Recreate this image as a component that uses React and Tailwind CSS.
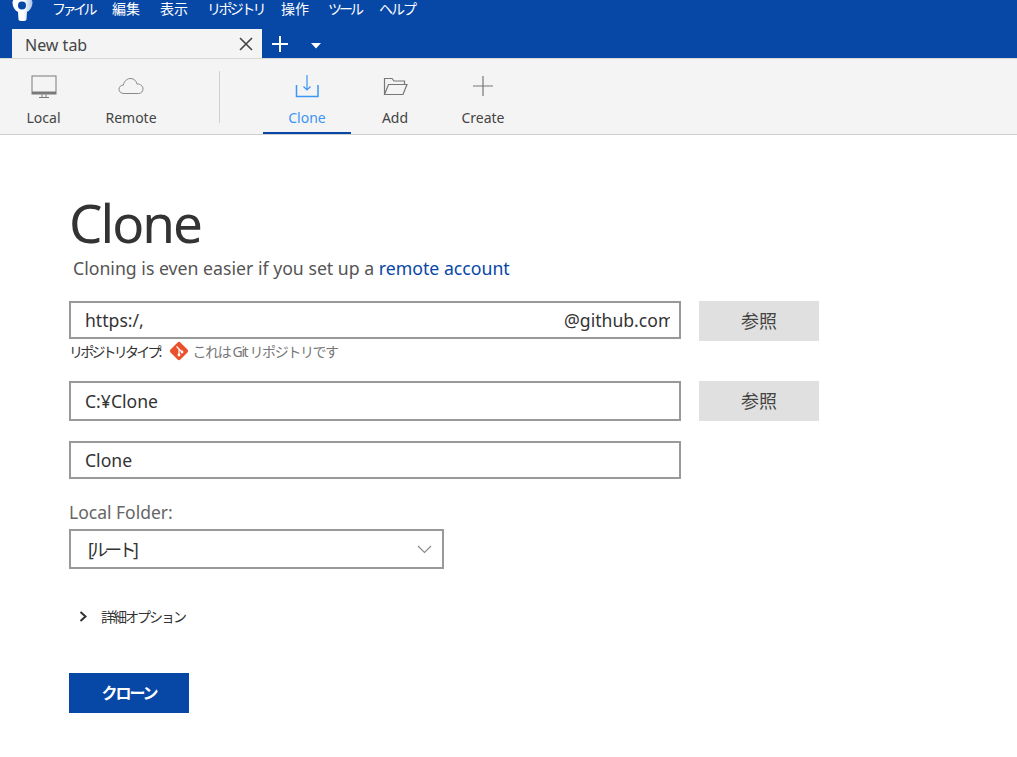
const F = "font-['Noto_Sans','Noto_Sans_CJK_JP',sans-serif]";

function Tool({ label, children, active, w = "w-[88px]" }) {
  return (
    <div className={`${w} h-[75px] flex flex-col items-center border-b-2 ${active ? "border-[#0747a6]" : "border-transparent"}`}>
      <div className="h-[36px] mt-[10px] mb-[2px] flex items-center justify-center">{children}</div>
      <div className={`mt-[1px] text-[14px] leading-[20px] ${active ? "text-[#3d95f5]" : "text-[#444]"}`}>{label}</div>
    </div>
  );
}

function Field({ children, h = "h-[38px]", w = "w-[612px]" }) {
  return (
    <div className={`${w} ${h} border-2 border-[#999] bg-white flex items-center justify-between pl-[14px] pr-[9px] text-[17.6px] text-[#333] overflow-hidden whitespace-nowrap`}>
      {children}
    </div>
  );
}

function Browse() {
  return <div className="w-[120px] h-[40px] ml-[18px] bg-[#e0e0e0] flex items-center justify-center text-[18px] text-[#444]">参照</div>;
}

export default function App() {
  return (
    <div className={`${F} w-[1017px] h-[757px] bg-white overflow-hidden`}>
      <div className="h-[58px] bg-[#0747a6] flex flex-col">
        <div className="h-[29px] flex items-start">
          <svg className="ml-[12px]" width="21" height="22" viewBox="0 0 21 22">
            <defs>
              <linearGradient id="logoShade" x1="0" x2="1" y1="0" y2="0">
                <stop offset="0.55" stopColor="#ffffff" />
                <stop offset="1" stopColor="#a9c2e6" />
              </linearGradient>
            </defs>
            <path d="M0.5 2 C0.5 -4 20.5 -4 20.5 2 C20.5 7 18 10.5 15 12 L14.5 19.5 C14.5 21.5 6.5 21.5 6.5 19.5 L6 12 C3 10.5 0.5 7 0.5 2Z" fill="url(#logoShade)" />
            <circle cx="10" cy="5.5" r="4" fill="#0747a6" />
          </svg>
          <div className="ml-[19px] mt-[-1px] flex text-[14px] leading-[19px] text-white whitespace-nowrap">
            <span className="w-[60px] tracking-[-3.5px]">ファイル</span>
            <span className="w-[48px]">編集</span>
            <span className="w-[47px]">表示</span>
            <span className="w-[74px] tracking-[-2.6px]">リポジトリ</span>
            <span className="w-[47px]">操作</span>
            <span className="w-[51px] tracking-[-3px]">ツール</span>
            <span className="tracking-[-2px]">ヘルプ</span>
          </div>
        </div>
        <div className="h-[29px] flex items-start">
          <div className="ml-[12px] w-[250px] h-[29px] bg-[#f4f4f4] flex items-center justify-between pl-[13px] pr-[9px]">
            <span className="mt-[2px] text-[16px] leading-[24px] text-[#444]">New tab</span>
            <svg width="14" height="14" viewBox="0 0 14 14" className="mt-[1px]">
              <path d="M1 1 L13 13 M13 1 L1 13" stroke="#444" strokeWidth="1.6" />
            </svg>
          </div>
          <svg width="18" height="18" viewBox="0 0 18 18" className="ml-[9px] mt-[6px]">
            <path d="M9 1 V17 M1 9 H17" stroke="#fff" strokeWidth="2" />
          </svg>
          <svg width="10" height="6" viewBox="0 0 10 6" className="ml-[22px] mt-[14px]">
            <path d="M0 0 H10 L5 5.5Z" fill="#fff" />
          </svg>
        </div>
      </div>

      <div className="h-[77px] bg-[#f4f4f4] border-t border-b border-t-[#d8d8d8] border-b-[#cfcfcf] flex items-start">
        <Tool label="Local" w="w-[87px]">
          <svg width="26" height="24" viewBox="0 0 26 24" fill="none">
            <rect x="1" y="1" width="24" height="18" stroke="#7a7a7a" strokeWidth="1" />
            <rect x="1" y="16.5" width="24" height="2.5" fill="#7a7a7a" />
            <path d="M11 19.5 V22 M15 19.5 V22 M8 22.5 H18" stroke="#7a7a7a" strokeWidth="1" />
          </svg>
        </Tool>
        <Tool label="Remote">
          <svg width="26" height="18" viewBox="0 0 26 18" fill="none" className="mt-[-3px]">
            <path d="M6 16.5 C2.5 16.5 1 14.2 1 12.3 C1 9.8 3 8 5.3 8.2 C6 4 9.5 1.2 13 1.5 C16 1.7 18.3 3.8 19 7 C22.5 6.8 25 9 25 12 C25 14.6 23 16.5 20.5 16.5 Z" stroke="#8a8a8a" strokeWidth="1" />
          </svg>
        </Tool>
        <div className="ml-[44px] mt-[12px] w-px h-[52px] bg-[#d0d0d0]" />
        <div className="ml-[43px] flex">
          <Tool label="Clone" active>
            <svg width="24" height="24" viewBox="0 0 24 24" fill="none" className="mt-[-2px]">
              <path d="M12 1 V16 M8.5 12.5 L12 16 L15.5 12.5" stroke="#3d95f5" strokeWidth="1.2" />
              <path d="M1.5 11 V22.5 H23 V11" stroke="#3d95f5" strokeWidth="1.5" />
            </svg>
          </Tool>
          <Tool label="Add">
            <svg width="25" height="19" viewBox="0 0 25 19" fill="none" className="mt-[-2px]">
              <path d="M1.5 17.5 V1.5 H9 L11 4 H21.5 V7.5 M1.5 17.5 L5.5 7.5 H24 L20 17.5 Z" stroke="#777" strokeWidth="1.2" />
            </svg>
          </Tool>
          <Tool label="Create">
            <svg width="20" height="20" viewBox="0 0 20 20" fill="none" className="mt-[-3px] ml-[-1px]">
              <path d="M10 0 V20 M0 10 H20" stroke="#777" strokeWidth="1.2" />
            </svg>
          </Tool>
        </div>
      </div>

      <div className="pl-[69px]">
        <h1 className="mt-[53px] h-[71px] text-[53px] leading-[70px] font-normal text-[#333] tracking-[-2px]">Clone</h1>
        <p className="ml-[4px] h-[32px] text-[17.7px] leading-[18px] text-[#555] whitespace-nowrap">
          Cloning is even easier if you set up a <span className="text-[#0747a6]">remote account</span>
        </p>
        <div className="mt-[10px] flex items-start">
          <Field>
            <span>https:/,</span>
            <span className="w-[106px] overflow-hidden">@github.com</span>
          </Field>
          <Browse />
        </div>
        <div className="h-[20px] flex items-center text-[14px] whitespace-nowrap">
          <span className="text-[#333] tracking-[-2.8px]">リポジトリタイプ:</span>
          <svg width="22" height="22" viewBox="0 0 22 22" className="ml-[8px]">
            <rect x="4" y="4" width="14" height="14" rx="2" transform="rotate(45 11 11)" fill="#e9512d" />
            <path d="M8.5 6.5 L14 12 M11 9 V15" stroke="#fff" strokeWidth="1.2" />
            <circle cx="11" cy="15" r="1.4" fill="#fff" />
            <circle cx="14" cy="12" r="1.4" fill="#fff" />
          </svg>
          <span className="ml-[3px] text-[#777] tracking-[-1.4px]">これは Git リポジトリです</span>
        </div>
        <div className="mt-[20px] flex items-start">
          <Field h="h-[40px]">C:¥Clone</Field>
          <Browse />
        </div>
        <div className="mt-[20px]">
          <Field>Clone</Field>
        </div>
        <div className="mt-[21px] h-[29px] text-[17.5px] leading-[24px] text-[#666]">Local Folder:</div>
        <div className="w-[375px] h-[40px] border-2 border-[#999] bg-white flex items-center justify-between pl-[17px] pr-[10px] text-[17.6px] text-[#333]">
          <span className="tracking-[-3.4px]">[ルート]</span>
          <svg width="15" height="9" viewBox="0 0 15 9" fill="none">
            <path d="M1 1 L7.5 7.5 L14 1" stroke="#888" strokeWidth="1.1" />
          </svg>
        </div>
        <div className="mt-[37px] h-[20px] flex items-center text-[14px] text-[#333]">
          <svg width="9" height="11" viewBox="0 0 9 11" fill="none" className="ml-[10px]">
            <path d="M1.5 1 L6.5 5.5 L1.5 10" stroke="#333" strokeWidth="2" />
          </svg>
          <span className="ml-[13px] tracking-[-2px]">詳細オプション</span>
        </div>
        <div className="mt-[47px] w-[120px] h-[40px] bg-[#0747a6] flex items-center justify-center text-[16px] font-bold text-white tracking-[-2px]">クローン</div>
      </div>
    </div>
  );
}
